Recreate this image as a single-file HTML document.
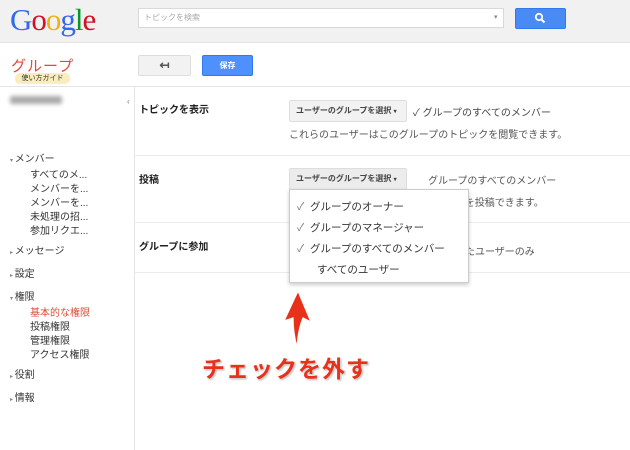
<!DOCTYPE html>
<html><head><meta charset="utf-8"><style>
*{margin:0;padding:0;box-sizing:border-box}
body{width:630px;height:450px;overflow:hidden;background:#fff;font-family:"Liberation Sans","Noto Sans CJK JP",sans-serif;position:relative;color:#222}
.a{position:absolute;white-space:nowrap}
.s{font-size:10px}
.btn{position:absolute;background:#f2f2f2;border:1px solid #ddd;border-radius:2px;font-size:8px;font-weight:bold;color:#444;padding-left:6px;line-height:20px;white-space:nowrap;overflow:hidden}
.hl{position:absolute;height:1px;background:#ebebeb}
</style></head><body>
<div class="a" style="left:0;top:0;width:630px;height:43px;background:#f1f1f1;border-bottom:1px solid #e5e5e5"></div>
<div class="a" style="left:10px;top:2px;font-family:'Liberation Serif',serif;font-size:31px;letter-spacing:-1px"><span style="color:#3369e8">G</span><span style="color:#d50f25">o</span><span style="color:#eeb211">o</span><span style="color:#3369e8">g</span><span style="color:#009925">l</span><span style="color:#d50f25">e</span></div>
<div class="a" style="left:138px;top:8px;width:366px;height:20px;background:#fff;border:1px solid #d9d9d9"></div>
<div class="a" style="left:144px;top:12px;font-size:8px;color:#aaa">トピックを検索</div>
<div class="a" style="left:494px;top:13px;font-size:7px;color:#888">▾</div>
<div class="a" style="left:515px;top:8px;width:51px;height:21px;background:#4a8af4;border:1px solid #3079ed;border-radius:2px"></div>
<svg class="a" style="left:534px;top:12px" width="12" height="12"><circle cx="5" cy="5" r="3.2" stroke="#fff" stroke-width="1.8" fill="none"/><path d="M7.5 7.5 L10.5 10.5" stroke="#fff" stroke-width="2"/></svg>
<div class="a" style="left:11px;top:55px;font-size:15px;color:#dd4b39;letter-spacing:1px">グループ</div>
<div class="a" style="left:15px;top:73px;width:55px;height:11px;background:#f9edbe;border-radius:5px;font-size:7px;color:#333;text-align:center;line-height:11px">使い方ガイド</div>
<div class="btn" style="left:138px;top:55px;width:53px;height:21px;text-align:center;padding:0;font-size:12px;color:#555;line-height:19px">↤</div>
<div class="a" style="left:202px;top:55px;width:51px;height:21px;background:#4d90fe;border:1px solid #3079ed;border-radius:2px;color:#fff;font-size:8px;font-weight:bold;text-align:center;line-height:19px">保存</div>
<div class="hl" style="left:0;top:86px;width:630px;background:#e5e5e5"></div>
<div class="a" style="left:134px;top:87px;width:1px;height:363px;background:#e5e5e5"></div>
<div class="a" style="left:127px;top:97px;font-size:8px;color:#777">‹</div>
<div class="a" style="left:10px;top:96px;width:52px;height:8px;background:#aaa;filter:blur(2px);border-radius:2px"></div>
<div class="a s" style="left:10px;top:152px;line-height:15px;color:#333">
<div><span style="font-size:6px;color:#888">▾ </span>メンバー</div>
<div style="padding-left:20px;line-height:14px">すべてのメ...<br>メンバーを...<br>メンバーを...<br>未処理の招...<br>参加リクエ...</div>
<div style="margin-top:5px"><span style="font-size:6px;color:#888">▸ </span>メッセージ</div>
<div style="margin-top:6px"><span style="font-size:6px;color:#888">▸ </span>設定</div>
<div style="margin-top:6px"><span style="font-size:6px;color:#888">▾ </span>権限</div>
<div style="padding-left:20px;line-height:14px"><span style="color:#dd4b39">基本的な権限</span><br>投稿権限<br>管理権限<br>アクセス権限</div>
<div style="margin-top:5px"><span style="font-size:6px;color:#888">▸ </span>役割</div>
<div style="margin-top:6px"><span style="font-size:6px;color:#888">▸ </span>情報</div>
</div>
<div class="a s" style="left:139px;top:101px;font-weight:bold">トピックを表示</div>
<div class="btn" style="left:289px;top:100px;width:118px;height:22px">ユーザーのグループを選択 <span style="font-size:6px">▾</span></div>
<div class="a s" style="left:413px;top:104px;color:#444">✓ グループのすべてのメンバー</div>
<div class="a s" style="left:289px;top:126px;color:#555">これらのユーザーはこのグループのトピックを閲覧できます。</div>
<div class="hl" style="left:134px;top:155px;width:496px"></div>
<div class="a s" style="left:139px;top:171px;font-weight:bold">投稿</div>
<div class="btn" style="left:289px;top:168px;width:118px;height:22px;background:#ececec">ユーザーのグループを選択 <span style="font-size:6px">▾</span></div>
<div class="a s" style="left:428px;top:172px;color:#555">グループのすべてのメンバー</div>
<div class="a s" style="left:445px;top:194px;color:#555">ージを投稿できます。</div>
<div class="hl" style="left:134px;top:222px;width:496px"></div>
<div class="a s" style="left:139px;top:238px;font-weight:bold">グループに参加</div>
<div class="a s" style="left:465px;top:243px;color:#555">たユーザーのみ</div>
<div class="hl" style="left:134px;top:272px;width:496px"></div>
<div class="a" style="left:289px;top:189px;width:180px;height:94px;background:#fff;border:1px solid #ccc;box-shadow:0 2px 4px rgba(0,0,0,.2)"></div>
<div class="a" style="left:297px;top:197px;line-height:21px;color:#333;font-size:10.5px">
<div><span style="color:#777">✓</span>&nbsp; グループのオーナー</div>
<div><span style="color:#777">✓</span>&nbsp; グループのマネージャー</div>
<div><span style="color:#777">✓</span>&nbsp; グループのすべてのメンバー</div>
<div style="padding-left:20px">すべてのユーザー</div>
</div>
<svg class="a" style="left:280px;top:288px" width="34" height="64"><path d="M18 3 L31 34 L23 30 Q18 42 17 60 Q13 44 13 30 L4 33 Z" fill="#e8311a" stroke="#fff" stroke-width="1.2"/></svg>
<div class="a" style="left:202px;top:350px;font-size:23px;font-weight:bold;color:#e8311a;text-shadow:0 0 2px #fff,1px 1px 2px #999;letter-spacing:1px">チェックを外す</div>
</body></html>
